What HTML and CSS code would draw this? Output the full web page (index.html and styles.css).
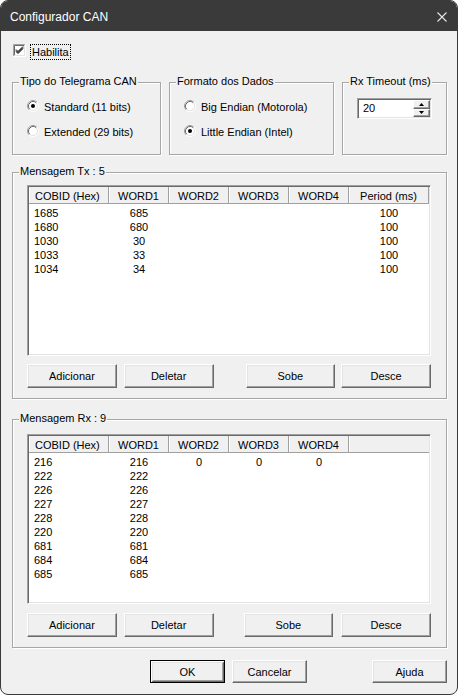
FILE: index.html
```html
<!DOCTYPE html>
<html lang="pt">
<head>
<meta charset="utf-8">
<title>Configurador CAN</title>
<link rel="stylesheet" href="styles.css">
</head>
<body>
<div class="window">
  <div class="titlebar">
    <span class="title">Configurador CAN</span>
    <svg class="close" width="10" height="10" viewBox="0 0 10 10"><path d="M0.5 0.5 L9.5 9.5 M9.5 0.5 L0.5 9.5" stroke="#e6e6e6" stroke-width="1.1" fill="none"/></svg>
  </div>
  <div class="content">
    <div class="enable">
      <svg class="checkbox" width="13" height="13" viewBox="0 0 13 13">
        <rect x="0" y="0" width="13" height="13" fill="#fff"/>
        <path d="M0.5 12 V0.5 H12" stroke="#a0a0a0" fill="none"/>
        <path d="M1.5 11 V1.5 H11" stroke="#696969" fill="none"/>
        <path d="M1 11.5 H11.5 V1" stroke="#e3e3e3" fill="none"/>
        <path d="M3 5.5 L5 7.5 L10 2.5 M3 6.5 L5 8.5 L10 3.5 M3 7.5 L5 9.5 L10 4.5" stroke="#000" fill="none" stroke-width="1"/>
      </svg>
      <span class="focus">Habilita</span>
    </div>

    <div class="top-groups">
      <div class="group g-tipo">
        <span class="legend">Tipo do Telegrama CAN</span>
        <div class="radio">
          <svg class="radio-icon" width="12" height="12" viewBox="0 0 12 12">
            <circle cx="6" cy="6" r="4.5" fill="#fff"/>
            <path d="M2.11 9.89 A5.5 5.5 0 0 1 9.89 2.11" stroke="#a0a0a0" fill="none"/>
            <path d="M2.82 9.18 A4.5 4.5 0 0 1 9.18 2.82" stroke="#696969" fill="none"/>
            <path d="M9.89 2.11 A5.5 5.5 0 0 1 2.11 9.89" stroke="#ffffff" fill="none"/>
            <path d="M9.18 2.82 A4.5 4.5 0 0 1 2.82 9.18" stroke="#e3e3e3" fill="none"/>
            <circle cx="6" cy="6" r="2" fill="#000"/>
          </svg>
          <span>Standard (11 bits)</span>
        </div>
        <div class="radio">
          <svg class="radio-icon" width="12" height="12" viewBox="0 0 12 12">
            <circle cx="6" cy="6" r="4.5" fill="#fff"/>
            <path d="M2.11 9.89 A5.5 5.5 0 0 1 9.89 2.11" stroke="#a0a0a0" fill="none"/>
            <path d="M2.82 9.18 A4.5 4.5 0 0 1 9.18 2.82" stroke="#696969" fill="none"/>
            <path d="M9.89 2.11 A5.5 5.5 0 0 1 2.11 9.89" stroke="#ffffff" fill="none"/>
            <path d="M9.18 2.82 A4.5 4.5 0 0 1 2.82 9.18" stroke="#e3e3e3" fill="none"/>
          </svg>
          <span>Extended (29 bits)</span>
        </div>
      </div>

      <div class="group g-formato">
        <span class="legend">Formato dos Dados</span>
        <div class="radio">
          <svg class="radio-icon" width="12" height="12" viewBox="0 0 12 12">
            <circle cx="6" cy="6" r="4.5" fill="#fff"/>
            <path d="M2.11 9.89 A5.5 5.5 0 0 1 9.89 2.11" stroke="#a0a0a0" fill="none"/>
            <path d="M2.82 9.18 A4.5 4.5 0 0 1 9.18 2.82" stroke="#696969" fill="none"/>
            <path d="M9.89 2.11 A5.5 5.5 0 0 1 2.11 9.89" stroke="#ffffff" fill="none"/>
            <path d="M9.18 2.82 A4.5 4.5 0 0 1 2.82 9.18" stroke="#e3e3e3" fill="none"/>
          </svg>
          <span>Big Endian (Motorola)</span>
        </div>
        <div class="radio">
          <svg class="radio-icon" width="12" height="12" viewBox="0 0 12 12">
            <circle cx="6" cy="6" r="4.5" fill="#fff"/>
            <path d="M2.11 9.89 A5.5 5.5 0 0 1 9.89 2.11" stroke="#a0a0a0" fill="none"/>
            <path d="M2.82 9.18 A4.5 4.5 0 0 1 9.18 2.82" stroke="#696969" fill="none"/>
            <path d="M9.89 2.11 A5.5 5.5 0 0 1 2.11 9.89" stroke="#ffffff" fill="none"/>
            <path d="M9.18 2.82 A4.5 4.5 0 0 1 2.82 9.18" stroke="#e3e3e3" fill="none"/>
            <circle cx="6" cy="6" r="2" fill="#000"/>
          </svg>
          <span>Little Endian (Intel)</span>
        </div>
      </div>

      <div class="group g-timeout">
        <span class="legend">Rx Timeout (ms)</span>
        <div class="spin">
          <span class="spin-text">20</span>
          <div class="spin-buttons">
            <div class="spin-btn"><svg width="5" height="3" viewBox="0 0 5 3"><path d="M2.5 0 L5 3 H0 Z" fill="#000"/></svg></div>
            <div class="spin-btn"><svg width="5" height="3" viewBox="0 0 5 3"><path d="M0 0 H5 L2.5 3 Z" fill="#000"/></svg></div>
          </div>
        </div>
      </div>
    </div>

    <div class="group g-tx">
      <span class="legend">Mensagem Tx : 5</span>
      <div class="listview lv-tx">
        <div class="lv-head">
          <div class="hcell left">COBID (Hex)</div>
          <div class="hcell">WORD1</div>
          <div class="hcell">WORD2</div>
          <div class="hcell">WORD3</div>
          <div class="hcell">WORD4</div>
          <div class="hcell">Period (ms)</div>
        </div>
        <div class="lv-body">
          <div class="lv-row"><span class="left">1685</span><span>685</span><span></span><span></span><span></span><span>100</span></div>
          <div class="lv-row"><span class="left">1680</span><span>680</span><span></span><span></span><span></span><span>100</span></div>
          <div class="lv-row"><span class="left">1030</span><span>30</span><span></span><span></span><span></span><span>100</span></div>
          <div class="lv-row"><span class="left">1033</span><span>33</span><span></span><span></span><span></span><span>100</span></div>
          <div class="lv-row"><span class="left">1034</span><span>34</span><span></span><span></span><span></span><span>100</span></div>
        </div>
      </div>
      <div class="btn-row">
        <button class="btn">Adicionar</button>
        <button class="btn b2">Deletar</button>
        <button class="btn b3-tx">Sobe</button>
        <button class="btn b4-tx">Desce</button>
      </div>
    </div>

    <div class="group g-rx">
      <span class="legend">Mensagem Rx : 9</span>
      <div class="listview lv-rx">
        <div class="lv-head">
          <div class="hcell left">COBID (Hex)</div>
          <div class="hcell">WORD1</div>
          <div class="hcell">WORD2</div>
          <div class="hcell">WORD3</div>
          <div class="hcell">WORD4</div>
          <div class="hcell filler"></div>
        </div>
        <div class="lv-body">
          <div class="lv-row"><span class="left">216</span><span>216</span><span>0</span><span>0</span><span>0</span></div>
          <div class="lv-row"><span class="left">222</span><span>222</span><span></span><span></span><span></span></div>
          <div class="lv-row"><span class="left">226</span><span>226</span><span></span><span></span><span></span></div>
          <div class="lv-row"><span class="left">227</span><span>227</span><span></span><span></span><span></span></div>
          <div class="lv-row"><span class="left">228</span><span>228</span><span></span><span></span><span></span></div>
          <div class="lv-row"><span class="left">220</span><span>220</span><span></span><span></span><span></span></div>
          <div class="lv-row"><span class="left">681</span><span>681</span><span></span><span></span><span></span></div>
          <div class="lv-row"><span class="left">684</span><span>684</span><span></span><span></span><span></span></div>
          <div class="lv-row"><span class="left">685</span><span>685</span><span></span><span></span><span></span></div>
        </div>
      </div>
      <div class="btn-row">
        <button class="btn">Adicionar</button>
        <button class="btn b2">Deletar</button>
        <button class="btn b3-rx">Sobe</button>
        <button class="btn b4-rx">Desce</button>
      </div>
    </div>

    <div class="footer">
      <button class="btn dlg default">OK</button>
      <button class="btn dlg cancel">Cancelar</button>
      <button class="btn dlg help">Ajuda</button>
    </div>
  </div>
</div>
</body>
</html>
```

FILE: styles.css
```css
* { box-sizing: border-box; }

html, body {
  margin: 0;
  padding: 0;
  background: #ffffff;
}

body {
  font-family: "Liberation Sans", Arial, sans-serif;
  font-size: 11px;
  color: #000;
}

.window {
  width: 458px;
  height: 695px;
  border: 1px solid #3a3a3a;
  border-radius: 8px;
  overflow: hidden;
  background: #f0f0f0;
  display: flex;
  flex-direction: column;
}

.titlebar {
  height: 30px;
  flex: none;
  background: #3a3a3a;
  display: flex;
  align-items: center;
  justify-content: space-between;
  padding: 0 10px 0 9px;
}

.title {
  color: #ffffff;
  font-size: 12px;
  line-height: 14px;
  margin-top: 1px;
}

.close {
  display: block;
  margin-top: 1px;
}

.content {
  flex: 1;
  padding: 0 10px 0 11px;
  display: flex;
  flex-direction: column;
}

/* enable checkbox */
.enable {
  margin-top: 13px;
  height: 16px;
  display: flex;
  align-items: center;
}

.checkbox {
  display: block;
  margin-left: 1px;
  margin-top: -3px;
}

.focus {
  margin-left: 4px;
  border: 1px dotted #000;
  height: 16px;
  line-height: 14px;
  padding: 0 1px 0 1px;
}

/* group boxes */
.group {
  position: relative;
  border: 1px solid #a6a6a6;
  box-shadow: inset 1px 1px 0 #ffffff, 1px 1px 0 #ffffff;
}

.legend {
  position: absolute;
  top: -8px;
  left: 6px;
  line-height: 13px;
  padding: 0 1px;
  background: #f0f0f0;
  white-space: nowrap;
}

.top-groups {
  margin-top: 22px;
  display: flex;
  gap: 8px;
}

.g-tipo, .g-formato, .g-timeout {
  height: 73px;
  padding: 16px 0 0 14px;
}

.g-tipo { width: 149px; }
.g-formato { width: 165px; }
.g-timeout { width: 105px; padding-top: 15px; }

.radio {
  height: 16px;
  line-height: 16px;
  display: flex;
  align-items: center;
  white-space: nowrap;
}

.radio + .radio { margin-top: 9px; }

.radio-icon {
  display: block;
  margin-right: 5px;
  margin-top: -2px;
  flex: none;
}

/* spin edit */
.spin {
  width: 75px;
  height: 21px;
  background: #fff;
  border: 1px solid;
  border-color: #a0a0a0 #ffffff #ffffff #a0a0a0;
  box-shadow: inset 1px 1px 0 #696969, inset -1px -1px 0 #e3e3e3;
  padding: 1px 1px 1px 5px;
  display: flex;
  justify-content: space-between;
}

.spin-text {
  line-height: 17px;
}

.spin-buttons {
  width: 17px;
  display: flex;
  flex-direction: column;
}

.spin-btn {
  flex: 1;
  background: #f0f0f0;
  border: 1px solid;
  border-color: #ffffff #696969 #696969 #ffffff;
  box-shadow: inset -1px -1px 0 #a0a0a0;
  display: flex;
  align-items: center;
  justify-content: center;
}

.spin-btn svg { display: block; }

/* message groups */
.g-tx {
  margin-top: 17px;
  height: 227px;
  padding: 12px 15px 10px 14px;
}

.g-rx {
  margin-top: 20px;
  height: 229px;
  padding: 14px 15px 10px 14px;
}

.listview {
  width: 404px;
  background: #ffffff;
  border: 1px solid;
  border-color: #a0a0a0 #ffffff #ffffff #a0a0a0;
  box-shadow: inset 1px 1px 0 #696969, inset -1px -1px 0 #e3e3e3;
  padding: 1px;
  overflow: hidden;
}

.lv-tx { height: 171px; }
.lv-rx { height: 170px; }

.lv-head {
  display: grid;
  grid-template-columns: 80px 60px 60px 60px 60px 80px;
  height: 17px;
  background: #f0f0f0;
  border-bottom: 1px solid #a0a0a0;
}

.lv-rx .lv-head {
  grid-template-columns: 80px 60px 60px 60px 60px 1fr;
}

.hcell {
  padding-top: 2px;
  line-height: 14px;
  text-align: center;
  border-right: 1px solid #a0a0a0;
  box-shadow: inset 1px 0 0 #ffffff;
  white-space: nowrap;
}

.hcell.left {
  text-align: left;
  padding-left: 6px;
}

.hcell.filler {
  border-right: none;
}

.lv-body {
  padding-top: 2px;
}

.lv-row {
  display: grid;
  grid-template-columns: 80px 60px 60px 60px 60px 80px;
  height: 14px;
  line-height: 14px;
}

.lv-row span {
  text-align: center;
  white-space: nowrap;
}

.lv-row span.left {
  text-align: left;
  padding-left: 5px;
}

/* buttons */
.btn-row {
  display: flex;
  margin-top: 8px;
}

.g-rx .btn-row { margin-top: 9px; }

.btn {
  font-family: "Liberation Sans", Arial, sans-serif;
  font-size: 11px;
  color: #000;
  width: 90px;
  height: 24px;
  padding: 0;
  margin: 0;
  background: #f0f0f0;
  border: 1px solid;
  border-color: #ffffff #696969 #696969 #ffffff;
  box-shadow: inset -1px -1px 0 #a0a0a0, inset 1px 1px 0 #e3e3e3;
  border-radius: 0;
  line-height: 14px;
}

.b2 { margin-left: 7px; }
.b3-tx { margin-left: 32px; }
.b4-tx { margin-left: 6px; }
.b3-rx { margin-left: 30px; }
.b4-rx { margin-left: 8px; }

.footer {
  margin-top: 12px;
  display: flex;
  justify-content: flex-end;
}

.btn.dlg {
  width: 75px;
  height: 23px;
}

.btn.default {
  border: 1px solid #000;
  box-shadow: inset 1px 1px 0 #ffffff, inset -1px -1px 0 #696969, inset 2px 2px 0 #e3e3e3, inset -2px -2px 0 #a0a0a0;
}

.btn.cancel { margin-left: 7px; }
.btn.help { margin-left: 65px; }
```
